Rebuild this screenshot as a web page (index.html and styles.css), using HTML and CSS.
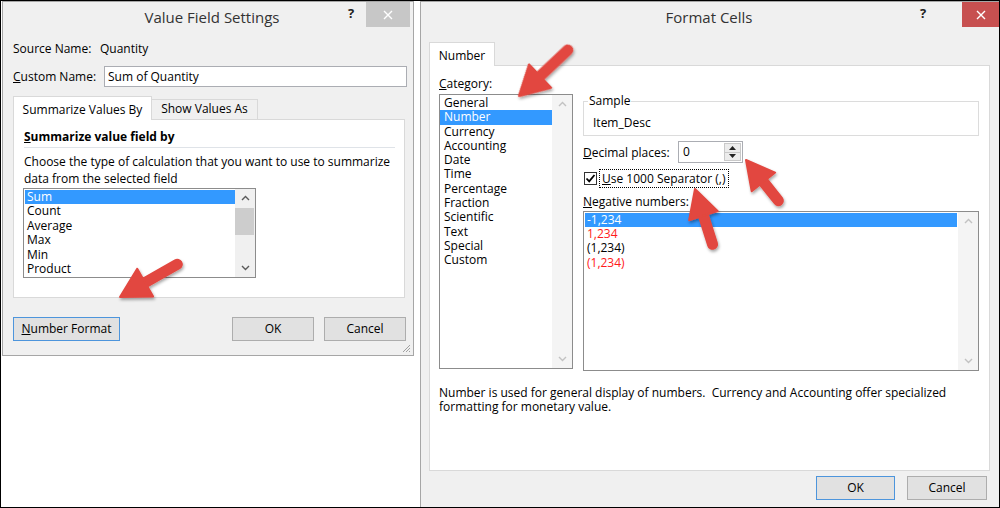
FILE: index.html
```html
<!DOCTYPE html>
<html>
<head>
<meta charset="utf-8">
<title>Value Field Settings / Format Cells</title>
<link rel="stylesheet" href="styles.css">
</head>
<body>
<div class="screen">
  <section class="dlg vfs">
    <header class="titlebar">
      <div class="title">Value Field Settings</div>
      <div class="help">?</div>
      <div class="close"><svg width="10" height="10" viewBox="0 0 10 10"><path d="M1 1L9 9M9 1L1 9" stroke="#fff" stroke-width="1.4"/></svg></div>
    </header>
    <div class="client">
      <div class="field-row src"><span class="lbl-src">Source Name:</span><span>Quantity</span></div>
      <div class="field-row cust"><span class="lbl-cust"><u>C</u>ustom Name:</span><div class="textbox">Sum of Quantity</div></div>
      <div class="tabs">
        <div class="tab active vfs-tab1">Summarize Values By</div>
        <div class="tab vfs-tab2">Show Values As</div>
      </div>
      <div class="panel vfs-panel">
        <div class="heading"><u>S</u>ummarize value field by</div>
        <p class="desc"><span class="line">Choose the type of calculation that you want to use to summarize</span><span class="line">data from the selected field</span></p>
        <div class="listbox calc-list">
          <div class="items">
            <div class="item sel">Sum</div>
            <div class="item">Count</div>
            <div class="item">Average</div>
            <div class="item">Max</div>
            <div class="item">Min</div>
            <div class="item">Product</div>
          </div>
          <div class="vscroll">
            <div class="sbtn"><svg width="9" height="6" viewBox="0 0 9 6"><path d="M1 5L4.5 1.5L8 5" fill="none" stroke="#5a5a5a" stroke-width="1.4"/></svg></div>
            <div class="track"><div class="thumb"></div></div>
            <div class="sbtn"><svg width="9" height="6" viewBox="0 0 9 6"><path d="M1 1L4.5 4.5L8 1" fill="none" stroke="#5a5a5a" stroke-width="1.4"/></svg></div>
          </div>
        </div>
      </div>
      <div class="btnrow">
        <button class="btn focused nf"><u>N</u>umber Format</button>
        <div class="spacer"></div>
        <button class="btn vfs-ok">OK</button>
        <button class="btn vfs-cancel">Cancel</button>
      </div>
    </div>
    <svg class="grip" width="9" height="9" viewBox="0 0 9 9"><path d="M8 1L1 8M8 4L4 8M8 7L7 8" stroke="#a0a0a0" stroke-width="1"/></svg>
  </section>

  <section class="dlg fc">
    <header class="titlebar">
      <div class="title">Format Cells</div>
      <div class="help">?</div>
      <div class="close"><svg width="10" height="10" viewBox="0 0 10 10"><path d="M1 1L9 9M9 1L1 9" stroke="#fff" stroke-width="1.4"/></svg></div>
    </header>
    <div class="client">
      <div class="tabs">
        <div class="tab active fc-tab">Number</div>
      </div>
      <div class="panel fc-panel">
        <div class="fc-body">
          <div class="cat-col">
            <div class="lbl"><u>C</u>ategory:</div>
            <div class="listbox cat-list">
              <div class="items">
                <div class="item">General</div>
                <div class="item sel">Number</div>
                <div class="item">Currency</div>
                <div class="item">Accounting</div>
                <div class="item">Date</div>
                <div class="item">Time</div>
                <div class="item">Percentage</div>
                <div class="item">Fraction</div>
                <div class="item">Scientific</div>
                <div class="item">Text</div>
                <div class="item">Special</div>
                <div class="item">Custom</div>
              </div>
              <div class="vscroll disabled">
                <div class="sbtn"><svg width="9" height="6" viewBox="0 0 9 6"><path d="M1 5L4.5 1.5L8 5" fill="none" stroke="#c2c2c2" stroke-width="1.4"/></svg></div>
                <div class="track"></div>
                <div class="sbtn"><svg width="9" height="6" viewBox="0 0 9 6"><path d="M1 1L4.5 4.5L8 1" fill="none" stroke="#c2c2c2" stroke-width="1.4"/></svg></div>
              </div>
            </div>
          </div>
          <div class="opts-col">
            <fieldset class="sample">
              <legend>Sample</legend>
              <div class="sample-val">Item_Desc</div>
            </fieldset>
            <div class="dec-row">
              <span class="dec-lbl"><u>D</u>ecimal places:</span>
              <div class="spin">
                <span class="spin-val">0</span>
                <div class="spinbtns">
                  <div class="sp"><svg width="7" height="4" viewBox="0 0 7 4"><path d="M0 4L3.5 0L7 4Z" fill="#222"/></svg></div>
                  <div class="sp"><svg width="7" height="4" viewBox="0 0 7 4"><path d="M0 0L3.5 4L7 0Z" fill="#222"/></svg></div>
                </div>
              </div>
            </div>
            <div class="chk-row">
              <span class="chk"><svg width="11" height="11" viewBox="0 0 11 11"><path d="M1.5 5.5L4.2 8.3L9.5 2" fill="none" stroke="#000" stroke-width="1.8"/></svg></span>
              <span class="focusbox"><u>U</u>se 1000 Separator (,)</span>
            </div>
            <div class="lbl neg-lbl"><u>N</u>egative numbers:</div>
            <div class="listbox neg-list">
              <div class="items">
                <div class="item sel">-1,234</div>
                <div class="item red">1,234</div>
                <div class="item">(1,234)</div>
                <div class="item red">(1,234)</div>
              </div>
              <div class="vscroll disabled">
                <div class="sbtn"><svg width="9" height="6" viewBox="0 0 9 6"><path d="M1 5L4.5 1.5L8 5" fill="none" stroke="#c2c2c2" stroke-width="1.4"/></svg></div>
                <div class="track"></div>
                <div class="sbtn"><svg width="9" height="6" viewBox="0 0 9 6"><path d="M1 1L4.5 4.5L8 1" fill="none" stroke="#c2c2c2" stroke-width="1.4"/></svg></div>
              </div>
            </div>
          </div>
        </div>
        <p class="fc-desc"><span class="line">Number is used for general display of numbers.&nbsp; Currency and Accounting offer specialized</span><span class="line">formatting for monetary value.</span></p>
      </div>
      <div class="btnrow fc-btns">
        <button class="btn focused fc-ok">OK</button>
        <button class="btn fc-cancel">Cancel</button>
      </div>
    </div>
  </section>

  <svg class="arrows" width="1000" height="508" viewBox="0 0 1000 508">
    <defs>
      <filter id="sh" x="-30%" y="-30%" width="160%" height="160%">
        <feDropShadow dx="1" dy="2" stdDeviation="1.6" flood-color="#000" flood-opacity="0.35"/>
      </filter>
    </defs>
    <g fill="#e2473f" stroke="#e2473f" filter="url(#sh)">
      <g transform="translate(120 297) rotate(150.2)">
        <line x1="-24" y1="0" x2="-66" y2="0" stroke-width="11" stroke-linecap="round"/>
        <polygon points="0,0 -29,-16 -29,16" stroke-width="2" stroke-linejoin="round"/>
      </g>
      <g transform="translate(519 96) rotate(136.7)">
        <line x1="-24" y1="0" x2="-67" y2="0" stroke-width="11" stroke-linecap="round"/>
        <polygon points="0,0 -29,-16 -29,16" stroke-width="2" stroke-linejoin="round"/>
      </g>
      <g transform="translate(746 160) rotate(-128.5)">
        <line x1="-24" y1="0" x2="-52" y2="0" stroke-width="11" stroke-linecap="round"/>
        <polygon points="0,0 -28,-15 -28,15" stroke-width="2" stroke-linejoin="round"/>
      </g>
      <g transform="translate(695 189) rotate(-107.6)">
        <line x1="-24" y1="0" x2="-58" y2="0" stroke-width="11" stroke-linecap="round"/>
        <polygon points="0,0 -28,-15 -28,15" stroke-width="2" stroke-linejoin="round"/>
      </g>
    </g>
  </svg>
</div>
</body>
</html>
```

FILE: styles.css
```css
* { box-sizing: border-box; }
html, body { margin: 0; padding: 0; background: #fff; }
body {
  font-family: "Open Sans", "Noto Sans", sans-serif;
  font-size: 12px;
  color: #000;
}
u { text-decoration: underline; text-underline-offset: 1px; }

.screen {
  position: relative;
  width: 1000px;
  height: 508px;
  border: 1px solid #000;
  background: #fff;
  display: flex;
  align-items: flex-start;
  overflow: hidden;
}

/* dialog windows */
.dlg {
  position: relative;
  flex: none;
  background: #f0f0f0;
  border: 1px solid #a6a6a6;
  display: flex;
  flex-direction: column;
}
.vfs { width: 412px; height: 355px; margin-left: 1px; }
.fc { width: 580px; height: 507px; margin-left: 6px; border-right: none; }

.titlebar { display: flex; height: 32px; flex: none; }
.title {
  flex: 1;
  text-align: center;
  font-size: 15px;
  line-height: 20px;
  padding-top: 5px;
  color: #333;
  white-space: nowrap;
}
.vfs .title { padding-left: 78px; }
.fc .title { padding-left: 82px; }
.help {
  width: 16px;
  margin-top: 2px;
  font-size: 13px;
  font-weight: 700;
  line-height: 18px;
  text-align: center;
  color: #222;
}
.vfs .help { margin-right: 7px; }
.fc .help { margin-right: 31px; }
.close {
  width: 44px;
  height: 25px;
  display: flex;
  align-items: center;
  justify-content: center;
  background: #c7c7c7;
}
.vfs .close { margin-right: 3px; }
.fc .close { width: 38px; background: #c75050; }

.client { flex: 1; display: flex; flex-direction: column; }
.vfs .client { padding: 7px 7px 0 10px; }
.fc .client { padding: 8px 10px 0 8px; }

/* value field settings rows */
.field-row { display: flex; align-items: center; }
.src { height: 16px; line-height: 16px; }
.lbl-src { width: 87px; }
.cust { margin-top: 9px; height: 21px; }
.lbl-cust { width: 91px; }
.textbox {
  flex: 1;
  height: 21px;
  margin-right: -1px;
  border: 1px solid #abadb3;
  background: #fff;
  padding-left: 3px;
  line-height: 19px;
}

/* tabs */
.tabs {
  display: flex;
  align-items: flex-end;
  height: 24px;
  position: relative;
  z-index: 1;
  margin-bottom: -1px;
  flex: none;
}
.vfs .tabs { margin-top: 9px; }
.tab {
  height: 20px;
  margin-bottom: 1px;
  border: 1px solid #d9d9d9;
  border-bottom: none;
  background: #f0f0f0;
  text-align: center;
  line-height: 16px;
  padding-top: 1px;
  white-space: nowrap;
}
.tab.active {
  height: 24px;
  margin-bottom: 0;
  background: #fff;
  padding-top: 5px;
}
.vfs-tab1 { width: 139px; }
.vfs-tab2 { width: 106px; border-left: none; }
.fc-tab { width: 66px; }

.panel { background: #fff; border: 1px solid #d9d9d9; flex: none; }
.vfs-panel { height: 179px; margin-right: 1px; padding: 9px 9px 0 10px; }

.heading {
  font-weight: 700;
  line-height: 16px;
  height: 19px;
  border-bottom: 1px solid #dfe3e8;
}
.desc { margin: 5px 0 0; white-space: nowrap; }
.desc .line { display: block; height: 17px; line-height: 17px; }

/* list boxes */
.listbox { display: flex; border: 1px solid #8c8c8c; background: #fff; }
.listbox .items { flex: 1; padding-top: 1px; }
.listbox .item { white-space: nowrap; }
.listbox .item.sel { background: #3399ff; color: #fff; }
.listbox .item.red { color: #ff1a1a; }

.calc-list { width: 233px; height: 90px; margin-top: 1px; margin-left: -1px; }
.calc-list .items { padding-left: 1px; }
.calc-list .item { height: 14.4px; line-height: 14.4px; padding-left: 2px; }

.vscroll { width: 19px; background: #f0f0f0; display: flex; flex-direction: column; flex: none; }
.sbtn { height: 18px; display: flex; align-items: center; justify-content: center; flex: none; }
.track { flex: 1; }
.thumb { height: 27px; margin: 1px 1px 0 0; background: #cdcdcd; }
.calc-list .vscroll { width: 20px; }
.vscroll.disabled { width: 20px; background: #f4f4f4; }

/* buttons */
.btnrow { display: flex; height: 24px; flex: none; }
.vfs .btnrow { margin-top: 19px; }
.spacer { flex: 1; }
.btn {
  height: 24px;
  padding: 0;
  border: 1px solid #adadad;
  background: #e1e1e1;
  font: inherit;
  color: #000;
  line-height: 20px;
}
.btn.focused { border-color: #4d95dc; }
.nf { width: 107px; }
.vfs-ok { width: 82px; }
.vfs-cancel { width: 82px; margin-left: 10px; }
.fc-btns { margin-top: 5px; justify-content: flex-end; padding-right: 3px; }
.fc-ok { width: 79px; }
.fc-cancel { width: 80px; margin-left: 12px; }

.grip { position: absolute; right: 2px; bottom: 2px; }

/* format cells panel */
.fc-panel { height: 406px; padding: 10px 9px 0 9px; }
.fc-body { display: flex; gap: 10px; align-items: flex-start; }
.cat-col { width: 134px; }
.lbl { height: 16px; line-height: 16px; white-space: nowrap; }
.cat-list { margin-top: 2px; height: 275px; }
.cat-list .item { height: 14.3px; line-height: 14.3px; padding-left: 4px; }

.opts-col { width: 396px; padding-top: 18px; }
.sample {
  margin: 0;
  height: 42px;
  padding: 0 9px 0 9px;
  border: 1px solid #dcdcdc;
  min-width: 0;
}
.sample legend {
  padding: 0 1px;
  margin-left: -5px;
  line-height: 14px;
}
.sample-val { margin-top: 7px; line-height: 16px; }

.dec-row { display: flex; align-items: center; height: 22px; margin-top: 5px; }
.dec-lbl { width: 95px; }
.spin {
  width: 65px;
  height: 22px;
  border: 1px solid #abadb3;
  background: #fff;
  display: flex;
  justify-content: space-between;
}
.spin-val { padding-left: 4px; line-height: 20px; }
.spinbtns {
  width: 17px;
  margin: 1px 1px 1px 0;
  border: 1px solid #c9c9c9;
  background: #ececec;
  display: flex;
  flex-direction: column;
}
.sp { flex: 1; display: flex; align-items: center; justify-content: center; }
.sp + .sp { border-top: 1px solid #c9c9c9; }

.chk-row { display: flex; align-items: center; height: 19px; margin-top: 6px; }
.chk {
  width: 13px;
  height: 13px;
  margin-left: 1px;
  border: 1px solid #333;
  background: #fff;
  display: flex;
  align-items: center;
  justify-content: center;
}
.focusbox {
  margin-left: 2px;
  height: 19px;
  border: 1px dotted #000;
  padding: 0 2px;
  line-height: 17px;
  white-space: nowrap;
}
.neg-lbl { margin-top: 6px; }
.neg-list { margin-top: 1px; height: 160px; }
.neg-list .items { padding: 1px 1px 0 1px; }
.neg-list .item { height: 14.2px; line-height: 14.2px; padding-left: 2px; }

.fc-desc { margin: 15px 0 0; white-space: nowrap; }
.fc-desc .line { display: block; height: 14px; line-height: 14px; }

/* annotation arrows */
.arrows { position: absolute; left: -1px; top: -1px; pointer-events: none; }
```
